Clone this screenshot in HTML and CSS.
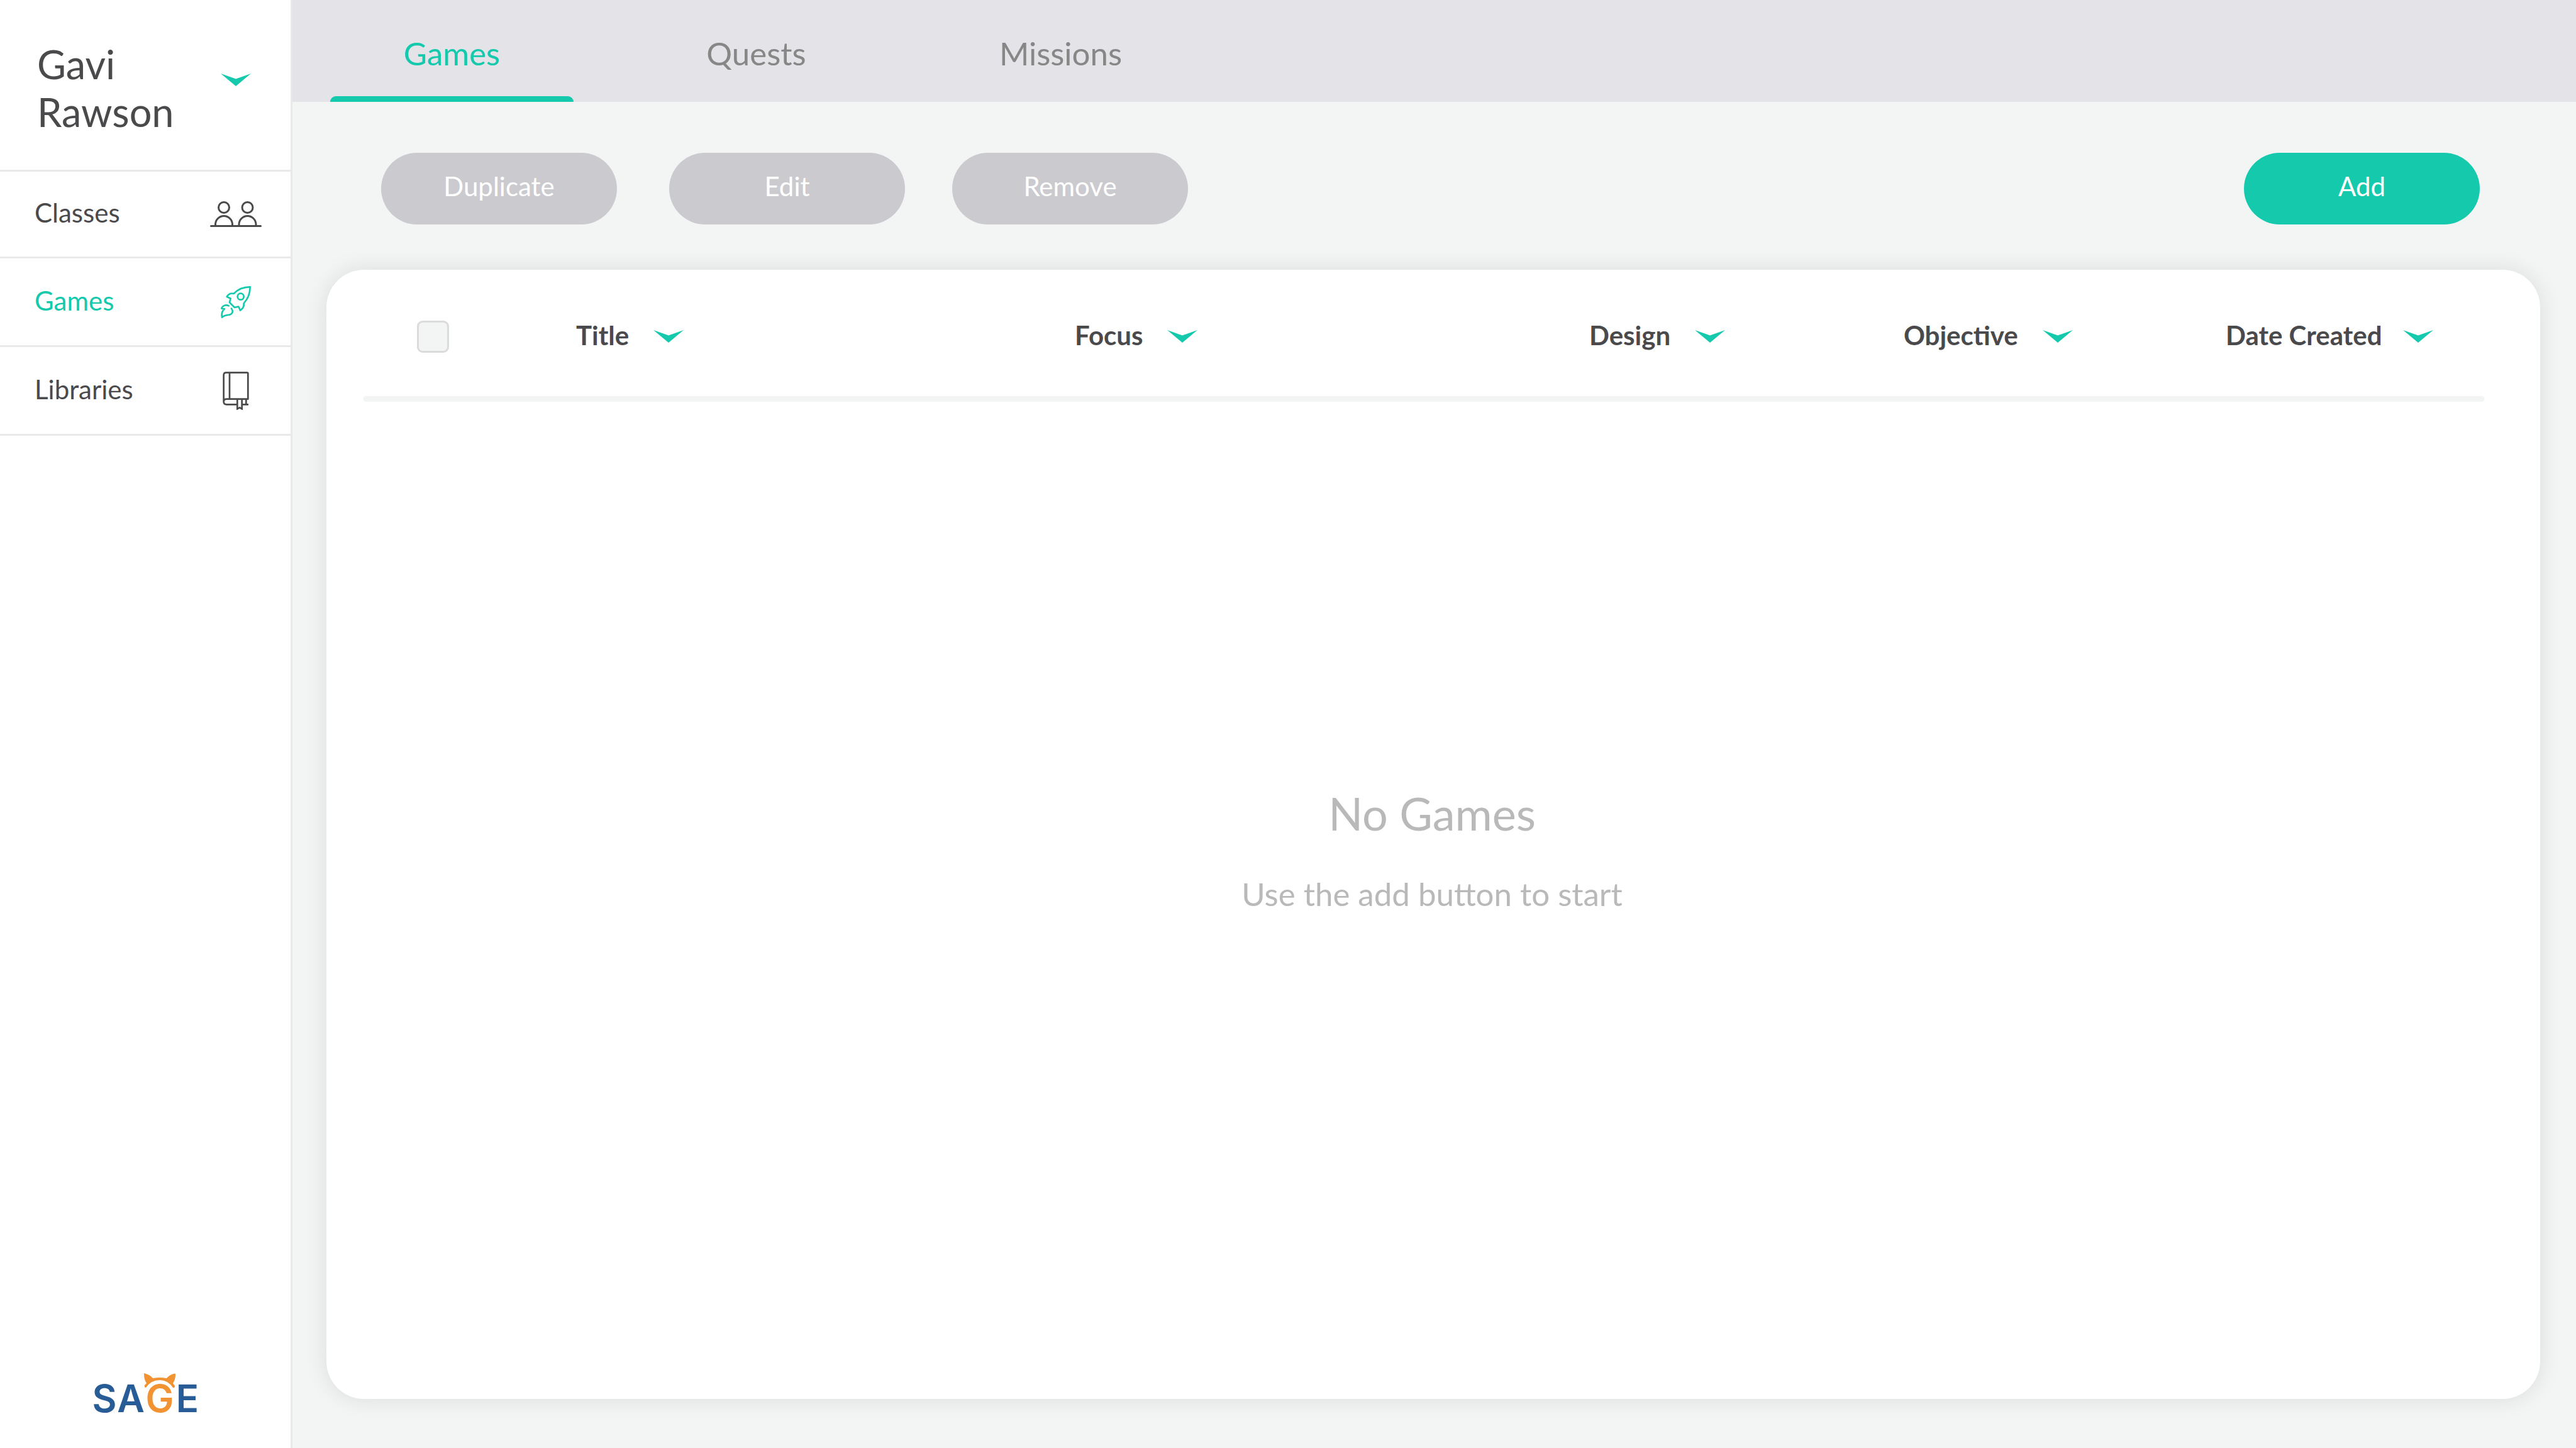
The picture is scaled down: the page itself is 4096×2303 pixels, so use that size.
FILE: index.html
```html
<!DOCTYPE html>
<html lang="en">
<head>
<meta charset="utf-8">
<title>Sage – Games</title>
<link rel="stylesheet" href="styles.css">
</head>
<body>
<svg class="defs" width="0" height="0" aria-hidden="true">
  <symbol id="chevron" viewBox="0 0 48 20"><path d="M0 0L24 8.500L48 0L24 20Z" fill="currentColor"/></symbol>
</svg>
<div class="app">
  <aside class="sidebar">
    <button class="profile" type="button">
      <span class="profile-name">Gavi<br>Rawson</span>
      <svg class="chevron"><use href="#chevron"/></svg>
    </button>
    <nav class="menu">
      <a class="menu-item" href="#classes">
        <span class="menu-label">Classes</span>
        <span class="menu-icon">
          <svg width="82" height="42" viewBox="0 0 82 42" fill="none" stroke="currentColor" stroke-width="3">
            <circle cx="22" cy="10" r="8.500"/><circle cx="59.500" cy="10" r="8.500"/>
            <path d="M8.500 39v-2a13.500 13.500 0 0 1 27 0v2M46 39v-2a13.500 13.500 0 0 1 27 0v2"/>
            <path d="M1.500 39.500h79" stroke-linecap="round"/>
          </svg>
        </span>
      </a>
      <a class="menu-item is-active" href="#games">
        <span class="menu-label">Games</span>
        <span class="menu-icon">
          <svg width="48" height="51" viewBox="0 0 144 153" fill="none" stroke="currentColor" stroke-width="8" stroke-linejoin="round" stroke-linecap="round">
            <path d="M140 4C108 4 82 15 62 36C47 33 36 38 29 51L47 59L42 78L66 102L85 98L93 116C107 107 112 96 110 82C131 60 140 34 140 4Z"/>
            <circle cx="95" cy="50" r="15"/>
            <path d="M38 94C24 87 8 93 4 107L18 109C6 119 3 133 6 149C18 138 30 138 42 137C56 133 61 121 51 107"/>
          </svg>
        </span>
      </a>
      <a class="menu-item" href="#libraries">
        <span class="menu-label">Libraries</span>
        <span class="menu-icon">
          <svg width="42" height="61" viewBox="0 0 126 183" fill="none" stroke="currentColor" stroke-width="8" stroke-linejoin="round">
            <path d="M5 144V17Q5 5 17 5H117Q121 5 121 9V131H19Q5 131 5 144Q5 157 19 157H70M94 157H123M112 131V157M33 5V131"/>
            <path d="M70 131V178L81 172L92 178V131" stroke-linejoin="miter"/>
          </svg>
        </span>
      </a>
    </nav>
    <a class="logo" href="#home" aria-label="Sage">
      <svg width="184" height="84" viewBox="-10 0 184 84">
        <g class="logo-letters">
          <text x="17" y="62">S</text>
          <text x="59" y="62">A</text>
          <text class="logo-accent" x="105" y="62">G</text>
          <text x="149" y="62">E</text>
        </g>
        <path class="logo-accent" d="M80 2C79 0 81 0 83 1Q90 3 94 8Q105 6 116 8Q120 3 127 1Q131 0 130 3Q130 10 126 16L129 20Q129 24 126 23Q118 11 105 11Q91 11 83 23Q80 23 81 19L84 16Q80 10 80 2Z"/>
      </svg>
    </a>
  </aside>
  <div class="content">
    <nav class="tabs">
      <a class="tab is-active" href="#games">Games</a>
      <a class="tab" href="#quests">Quests</a>
      <a class="tab" href="#missions">Missions</a>
    </nav>
    <main class="page">
      <div class="toolbar">
        <button class="button button-spaced" type="button" disabled>Duplicate</button>
        <button class="button" type="button" disabled>Edit</button>
        <button class="button" type="button" disabled>Remove</button>
        <button class="button button-primary" type="button">Add</button>
      </div>
      <section class="panel">
        <table class="games">
          <thead>
            <tr>
              <th class="col-check"><input class="check" type="checkbox" aria-label="Select all games"></th>
              <th class="col-title"><button class="sort" type="button">Title<svg class="chevron"><use href="#chevron"/></svg></button></th>
              <th class="col-focus"><button class="sort" type="button">Focus<svg class="chevron"><use href="#chevron"/></svg></button></th>
              <th class="col-design"><button class="sort" type="button">Design<svg class="chevron"><use href="#chevron"/></svg></button></th>
              <th class="col-objective"><button class="sort" type="button">Objective<svg class="chevron"><use href="#chevron"/></svg></button></th>
              <th class="col-date"><button class="sort" type="button">Date Created<svg class="chevron"><use href="#chevron"/></svg></button></th>
            </tr>
          </thead>
        </table>
        <hr class="divider">
        <div class="empty">
          <h1 class="empty-title">No Games</h1>
          <p class="empty-hint">Use the add button to start</p>
        </div>
      </section>
    </main>
  </div>
</div>
</body>
</html>
```
FILE: styles.css
```css
:root {
  --accent: #14c9ac;
  --ink: #4a4a4c;
  --line: #e9e9e9;
  --surface: #f3f5f4;
}

* {
  box-sizing: border-box;
}

body {
  margin: 0;
  font-family: Lato, "Open Sans", sans-serif;
  font-size: 42px;
  color: var(--ink);
  background: var(--surface);
}

a {
  color: inherit;
  text-decoration: none;
}

button {
  margin: 0;
  padding: 0;
  border: 0;
  background: none;
  font: inherit;
  color: inherit;
  cursor: pointer;
}

.defs {
  position: absolute;
}

.app {
  display: flex;
  min-height: 100vh;
}

.chevron {
  flex: none;
  display: block;
  width: 48px;
  height: 20px;
  color: var(--accent);
}

/* Sidebar */

.sidebar {
  flex: none;
  display: flex;
  flex-direction: column;
  width: 465px;
  border-right: 3px solid var(--line);
  background: #fff;
}

.profile {
  display: flex;
  justify-content: space-between;
  align-items: center;
  padding: 64px 63px 54px 59px;
  text-align: left;
}

.profile .chevron {
  margin-bottom: 26px;
}

.profile-name {
  font-size: 63px;
  line-height: 76px;
}

.menu {
  border-top: 3px solid var(--line);
}

.menu-item {
  display: flex;
  justify-content: space-between;
  align-items: center;
  height: 141px;
  padding: 0 46px 0 55px;
  border-bottom: 3px solid var(--line);
}

.menu-item:first-child {
  height: 138px;
}

.menu-item.is-active {
  color: var(--accent);
}

.menu-label {
  padding-bottom: 5px;
}

.menu-icon {
  display: flex;
  justify-content: center;
  width: 82px;
}

.logo {
  display: flex;
  justify-content: center;
  margin-top: auto;
  padding-bottom: 35px;
}

.logo-letters {
  font-family: Inter, Lato, sans-serif;
  font-size: 60px;
  font-weight: 600;
  text-anchor: middle;
  fill: #285c96;
}

.logo-accent {
  fill: #f19233;
}

/* Main area */

.content {
  flex: 1;
  display: flex;
  flex-direction: column;
  min-width: 0;
}

.tabs {
  display: flex;
  gap: 97px;
  padding-left: 60px;
  background: #e4e3e8;
}

.tab {
  display: flex;
  flex-direction: column;
  width: 387px;
  height: 162px;
  padding-top: 55px;
  font-size: 51px;
  line-height: 60px;
  text-align: center;
  color: #878787;
}

.tab.is-active {
  color: var(--accent);
}

.tab.is-active::after {
  content: "";
  height: 9px;
  margin-top: auto;
  border-radius: 9px 9px 0 0;
  background: var(--accent);
}

.page {
  flex: 1;
  display: flex;
  flex-direction: column;
  gap: 72px;
  padding: 81px 57px 78px 54px;
}

.toolbar {
  display: flex;
  gap: 75px;
  padding: 0 96px 0 87px;
}

.button {
  width: 375px;
  height: 114px;
  padding-bottom: 8px;
  border-radius: 57px;
  background: #cbcacf;
  color: #fff;
}

.button-spaced {
  margin-right: 8px;
}

.button-primary {
  margin-left: auto;
  background: var(--accent);
}

.panel {
  flex: 1;
  padding: 0 89px 0 59px;
  border-radius: 60px;
  background: #fff;
  box-shadow: 0 0 36px rgba(0, 0, 0, 0.1);
}

.games {
  width: 100%;
  border-collapse: collapse;
  table-layout: fixed;
}

.games th {
  height: 201px;
  padding: 0;
  text-align: left;
  font-weight: 700;
}

.games .col-check {
  width: 338px;
  padding: 12px 0 0 85px;
}

.col-title {
  width: 793px;
}

.col-focus {
  width: 818px;
}

.col-design {
  width: 500px;
}

.col-objective {
  width: 512px;
}

.col-date {
  width: 413px;
}

.check {
  appearance: none;
  display: block;
  width: 51px;
  height: 51px;
  margin: 0;
  border: 3px solid #dbdbdb;
  border-radius: 9px;
  background: var(--surface);
}

.sort {
  display: flex;
  align-items: center;
  gap: 39px;
  padding-top: 6px;
  line-height: 50px;
  white-space: nowrap;
}

.sort .chevron {
  margin-top: 4px;
}

.col-date .sort {
  gap: 34px;
}

.divider {
  height: 9px;
  margin: 0;
  border: 0;
  border-radius: 4px;
  background: var(--surface);
}

.empty {
  padding: 611px 0 60px 26px;
  text-align: center;
  color: #b9b9b9;
}

.empty-title {
  margin: 0;
  font-size: 72px;
  font-weight: 400;
  line-height: 86px;
}

.empty-hint {
  margin: 56px 0 0;
  font-size: 51px;
  line-height: 60px;
}
```
